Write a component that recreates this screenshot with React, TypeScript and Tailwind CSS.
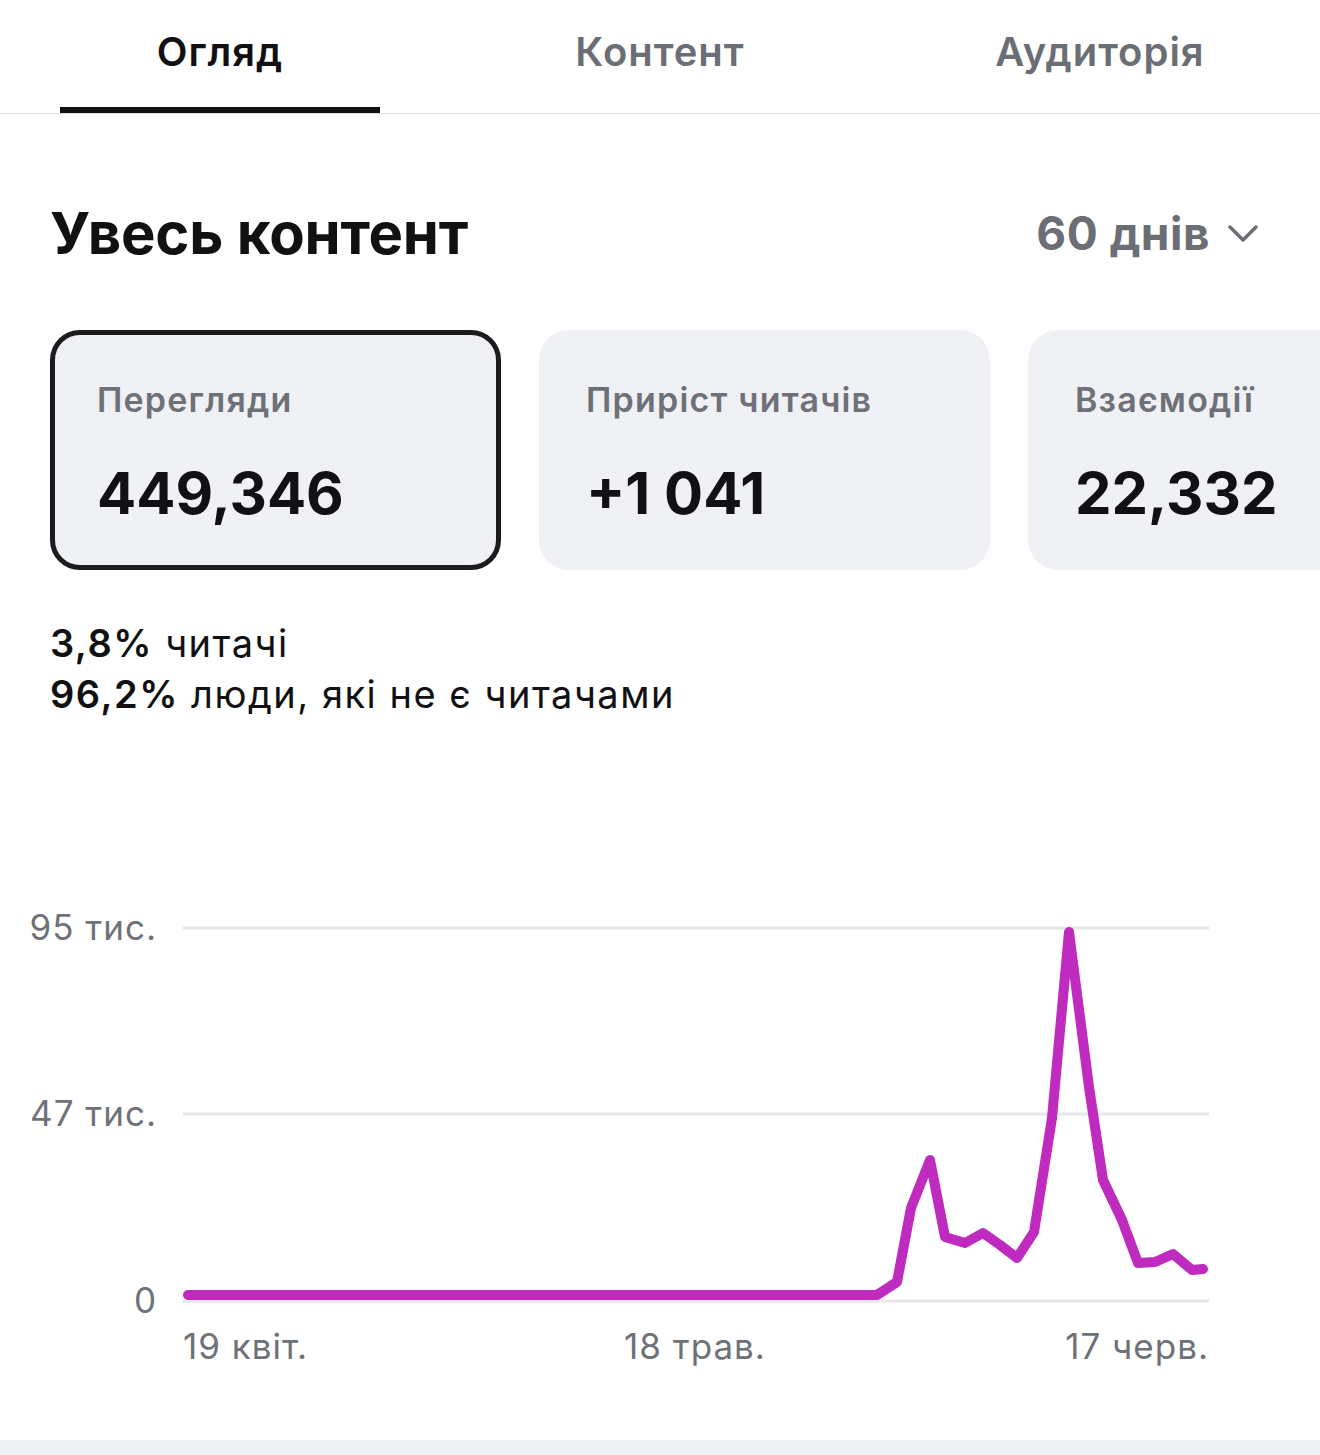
import React from 'react'

const tabs = ['Огляд', 'Контент', 'Аудиторія']

const cards = [
  { label: 'Перегляди', value: '449,346', active: true },
  { label: 'Приріст читачів', value: '+1 041', active: false },
  { label: 'Взаємодії', value: '22,332', active: false },
]

// points of the views line, page coordinates
const linePoints = [
  [188, 1295], [877, 1295], [897, 1282], [911, 1208], [930, 1160], [945, 1237],
  [965, 1243], [983, 1233], [1000, 1245], [1017, 1258], [1034, 1232], [1052, 1118],
  [1069, 932], [1089, 1087], [1103, 1180], [1122, 1220], [1138, 1263], [1155, 1262],
  [1173, 1254], [1192, 1270], [1203, 1269],
]

function ViewsChart() {
  const grid = [
    { y: 928, label: '95 тис.' },
    { y: 1114, label: '47 тис.' },
    { y: 1301, label: '0' },
  ]
  const label = { fontSize: 35, fill: '#6e7178', fontFamily: 'Inter, sans-serif', letterSpacing: 1 }
  return (
    <svg width={1320} height={480} viewBox="0 900 1320 480" className="block">
      {grid.map((g) => (
        <g key={g.y}>
          <line x1={183} x2={1209} y1={g.y} y2={g.y} stroke="#e6e6eb" strokeWidth={3} />
          <text x={157} y={g.y + 12} textAnchor="end" {...label}>
            {g.label}
          </text>
        </g>
      ))}
      <text x={183} y={1359} {...label}>19 квіт.</text>
      <text x={695} y={1359} textAnchor="middle" {...label}>18 трав.</text>
      <text x={1209} y={1359} textAnchor="end" {...label}>17 черв.</text>
      <polyline
        points={linePoints.map((p) => p.join(',')).join(' ')}
        fill="none"
        stroke="#c02bbf"
        strokeWidth={10}
        strokeLinecap="round"
        strokeLinejoin="round"
      />
    </svg>
  )
}

export default function App() {
  return (
    <div className="w-[1320px] h-[1455px] overflow-hidden bg-white font-['Inter',sans-serif] text-[#111113]">
      {/* Tabs */}
      <nav className="flex h-[114px] border-b border-[#dedee3]">
        {tabs.map((t, i) => (
          <div key={t} className="flex flex-1 flex-col items-center justify-between">
            <span
              className={`pt-[26px] text-[40px] leading-[52px] font-semibold tracking-[1px] ${i === 0 ? 'text-[#111113]' : 'text-[#6b6e75]'}`}
            >
              {t}
            </span>
            <div className={`h-[6px] w-[320px] ${i === 0 ? 'bg-[#111113]' : 'bg-transparent'}`} />
          </div>
        ))}
      </nav>

      {/* Header */}
      <div className="flex items-center justify-between pl-[50px] pr-[62px] pt-[88px]">
        <h1 className="text-[58px] leading-[62px] font-bold tracking-[-0.2px]">Увесь контент</h1>
        <button className="flex items-center gap-[18px] text-[46px] leading-[62px] font-bold text-[#6b6e75] tracking-[0.5px]">
          60 днів
          <svg width={30} height={20} viewBox="0 0 30 20">
            <polyline points="2,4 15,17 28,4" fill="none" stroke="#6b6e75" strokeWidth={3.5} strokeLinecap="round" strokeLinejoin="round" />
          </svg>
        </button>
      </div>

      {/* Stat cards */}
      <div className="mt-[66px] flex gap-[38px] pl-[50px]">
        {cards.map((c) => (
          <div
            key={c.label}
            className={`h-[240px] w-[451px] shrink-0 rounded-[30px] border-[5px] bg-[#f0f1f5] pl-[42px] pt-[45px] ${c.active ? 'border-[#1c1c1e]' : 'border-transparent'}`}
          >
            <div className="text-[34px] leading-[40px] font-semibold tracking-[1.2px] text-[#6e7178]">{c.label}</div>
            <div className="mt-[41px] text-[58px] leading-[64px] font-bold text-[#111113]">{c.value}</div>
          </div>
        ))}
      </div>

      {/* Audience split */}
      <div className="mt-[48px] pl-[50px] text-[38px] leading-[51px] tracking-[1.5px] text-[#111113]">
        <p>
          <span className="font-semibold">3,8%</span> читачі
        </p>
        <p>
          <span className="font-semibold">96,2%</span> люди, які не є читачами
        </p>
      </div>

      {/* Chart */}
      <div className="mt-[180px]">
        <ViewsChart />
      </div>

      <div className="mt-[60px] h-[15px] bg-[#f0f1f5]" />
    </div>
  )
}
